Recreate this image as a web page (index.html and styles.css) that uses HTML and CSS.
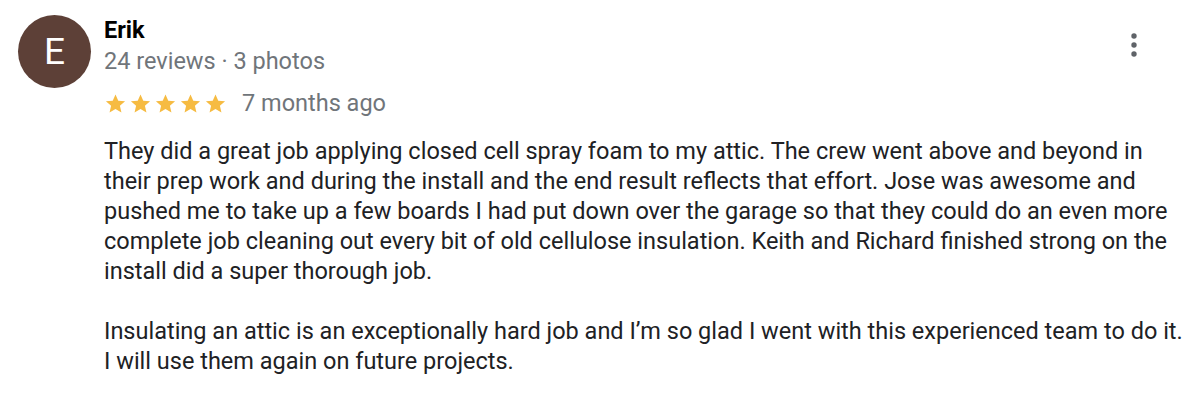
FILE: index.html
```html
<!DOCTYPE html>
<html>
<head>
<meta charset="utf-8">
<link rel="stylesheet" href="styles.css">
</head>
<body>
<div class="review">
  <div class="avatar">E</div>
  <div class="main">
    <div class="head">
      <div class="info">
        <div class="name">Erik</div>
        <div class="meta">24 reviews · 3 photos</div>
        <div class="rating">
          <span class="stars">
            <svg viewBox="0 0 24 24" class="star"><path d="M12 2.5l2.9 6.6 7.1.6-5.4 4.7 1.6 7-6.2-3.7-6.2 3.7 1.6-7L2 9.7l7.1-.6z"/></svg>
            <svg viewBox="0 0 24 24" class="star"><path d="M12 2.5l2.9 6.6 7.1.6-5.4 4.7 1.6 7-6.2-3.7-6.2 3.7 1.6-7L2 9.7l7.1-.6z"/></svg>
            <svg viewBox="0 0 24 24" class="star"><path d="M12 2.5l2.9 6.6 7.1.6-5.4 4.7 1.6 7-6.2-3.7-6.2 3.7 1.6-7L2 9.7l7.1-.6z"/></svg>
            <svg viewBox="0 0 24 24" class="star"><path d="M12 2.5l2.9 6.6 7.1.6-5.4 4.7 1.6 7-6.2-3.7-6.2 3.7 1.6-7L2 9.7l7.1-.6z"/></svg>
            <svg viewBox="0 0 24 24" class="star"><path d="M12 2.5l2.9 6.6 7.1.6-5.4 4.7 1.6 7-6.2-3.7-6.2 3.7 1.6-7L2 9.7l7.1-.6z"/></svg>
          </span>
          <span class="date">7 months ago</span>
        </div>
      </div>
      <button class="menu" aria-label="More">
        <svg viewBox="0 0 24 24" class="dots"><circle cx="12" cy="3" r="2.7"/><circle cx="12" cy="12" r="2.7"/><circle cx="12" cy="21" r="2.7"/></svg>
      </button>
    </div>
    <div class="text">They did a great job applying closed cell spray foam to my attic. The crew went above and beyond in their prep work and during the install and the end result reflects that effort. Jose was awesome and pushed me to take up a few boards I had put down over the garage so that they could do an even more complete job cleaning out every bit of old cellulose insulation. Keith and Richard finished strong on the install did a super thorough job.<br><br>Insulating an attic is an exceptionally hard job and I’m so glad I went with this experienced team to do it. I will use them again on future projects.</div>
  </div>
</div>
</body>
</html>
```

FILE: styles.css
```css
html, body {
  margin: 0;
  padding: 0;
  background: #ffffff;
}
body {
  font-family: Roboto, "Liberation Sans", Arial, sans-serif;
}
.review {
  display: flex;
  align-items: flex-start;
  padding: 15px 15px 0 18px;
  gap: 13px;
}
.avatar {
  flex: 0 0 73px;
  width: 73px;
  height: 73px;
  border-radius: 50%;
  background: #5d4037;
  color: #ffffff;
  font-size: 37px;
  line-height: 73px;
  text-align: center;
}
.main {
  flex: 1;
  min-width: 0;
}
.head {
  display: flex;
  align-items: flex-start;
}
.info {
  flex: 1;
}
.name {
  padding-top: 0;
  font-size: 23.5px;
  font-weight: 700;
  line-height: 30px;
  color: #000000;
}
.meta {
  font-size: 23.5px;
  line-height: 32px;
  color: #70757a;
}
.rating {
  display: flex;
  align-items: center;
  margin-top: 11px;
  height: 30px;
  gap: 15px;
}
.stars {
  display: flex;
  gap: 2px;
}
.star {
  width: 23px;
  height: 23px;
  fill: #f6bb42;
}
.date {
  font-size: 23.5px;
  color: #70757a;
}
.menu {
  border: 0;
  background: transparent;
  padding: 0;
  width: 24px;
  height: 24px;
  margin: 18px 39px 0 0;
  display: flex;
}
.dots {
  width: 24px;
  height: 24px;
  fill: #5f6368;
}
.text {
  margin-top: 18px;
  font-size: 23.5px;
  line-height: 30px;
  color: #202124;
}
```
